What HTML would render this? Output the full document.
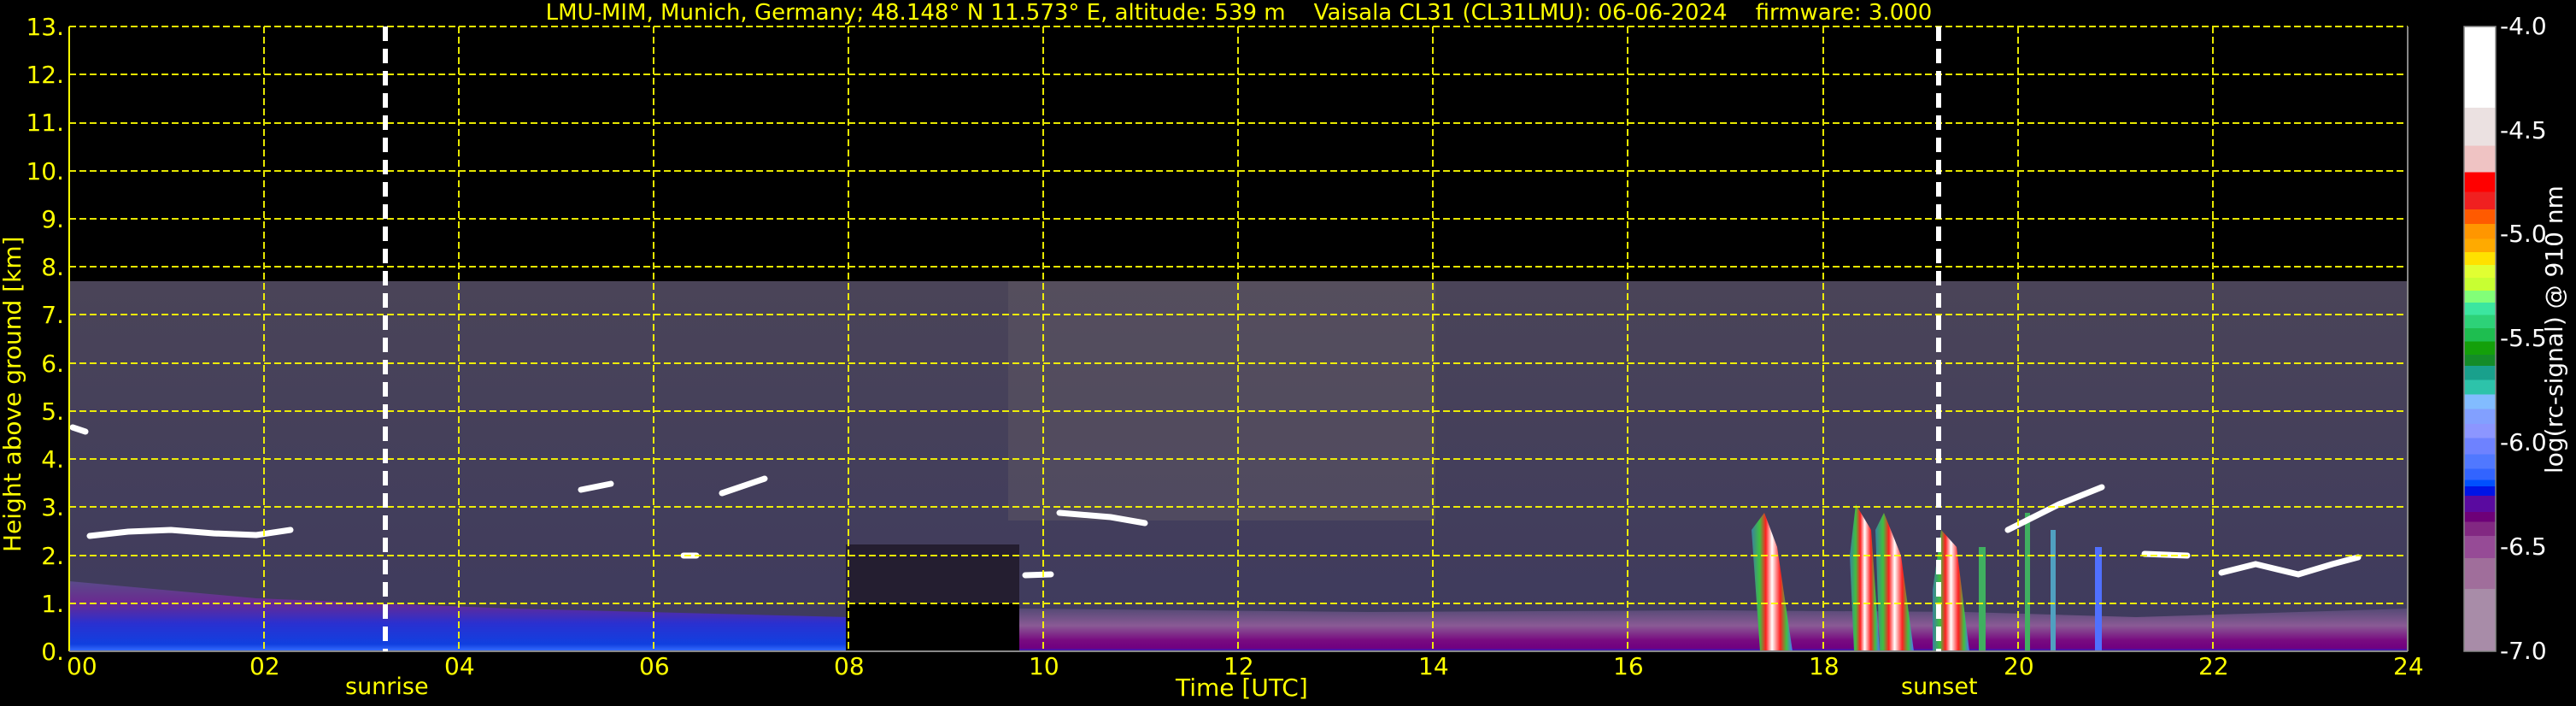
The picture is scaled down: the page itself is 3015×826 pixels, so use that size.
<!DOCTYPE html>
<html><head><meta charset="utf-8"><style>
html,body{margin:0;padding:0;background:#000;}
body{width:3015px;height:826px;overflow:hidden;position:relative;font-family:"DejaVu Sans","Liberation Sans",sans-serif;}
.t{position:absolute;white-space:nowrap;line-height:1;}
.y{color:#ffff00;}
.w{color:#fff;}
</style></head><body>
<svg width="3015" height="826" style="position:absolute;left:0;top:0">
<defs>
<linearGradient id="cb" x1="0" y1="0" x2="0" y2="1">
<stop offset="0" stop-color="#fff"/><stop offset=".13" stop-color="#fff"/>
<stop offset=".13" stop-color="#ebe1e1"/><stop offset=".191" stop-color="#ebe1e1"/>
<stop offset=".191" stop-color="#efc3c3"/><stop offset=".233" stop-color="#efc3c3"/>
<stop offset=".233" stop-color="#ff0000"/><stop offset=".265" stop-color="#ff0000"/>
<stop offset=".265" stop-color="#f02020"/><stop offset=".293" stop-color="#f02020"/>
<stop offset=".293" stop-color="#ff5a00"/><stop offset=".316" stop-color="#ff5a00"/>
<stop offset=".316" stop-color="#ff9600"/><stop offset=".34" stop-color="#ff9600"/>
<stop offset=".34" stop-color="#ffaa00"/><stop offset=".361" stop-color="#ffaa00"/>
<stop offset=".361" stop-color="#ffe100"/><stop offset=".382" stop-color="#ffe100"/>
<stop offset=".382" stop-color="#e1ff32"/><stop offset=".402" stop-color="#e1ff32"/>
<stop offset=".402" stop-color="#c8ff32"/><stop offset=".423" stop-color="#c8ff32"/>
<stop offset=".423" stop-color="#82ff78"/><stop offset=".442" stop-color="#82ff78"/>
<stop offset=".442" stop-color="#3ce6a0"/><stop offset=".462" stop-color="#3ce6a0"/>
<stop offset=".462" stop-color="#2dd278"/><stop offset=".483" stop-color="#2dd278"/>
<stop offset=".483" stop-color="#1ebe50"/><stop offset=".504" stop-color="#1ebe50"/>
<stop offset=".504" stop-color="#14a00a"/><stop offset=".525" stop-color="#14a00a"/>
<stop offset=".525" stop-color="#148c28"/><stop offset=".543" stop-color="#148c28"/>
<stop offset=".543" stop-color="#19a08c"/><stop offset=".566" stop-color="#19a08c"/>
<stop offset=".566" stop-color="#2dc3aa"/><stop offset=".589" stop-color="#2dc3aa"/>
<stop offset=".589" stop-color="#82bcff"/><stop offset=".612" stop-color="#82bcff"/>
<stop offset=".612" stop-color="#82a0ff"/><stop offset=".636" stop-color="#82a0ff"/>
<stop offset=".636" stop-color="#8c96ff"/><stop offset=".659" stop-color="#8c96ff"/>
<stop offset=".659" stop-color="#6e82ff"/><stop offset=".685" stop-color="#6e82ff"/>
<stop offset=".685" stop-color="#5078ff"/><stop offset=".708" stop-color="#5078ff"/>
<stop offset=".708" stop-color="#3264ff"/><stop offset=".726" stop-color="#3264ff"/>
<stop offset=".726" stop-color="#0050ff"/><stop offset=".736" stop-color="#0050ff"/>
<stop offset=".736" stop-color="#0014e6"/><stop offset=".751" stop-color="#0014e6"/>
<stop offset=".751" stop-color="#5a0aa0"/><stop offset=".777" stop-color="#5a0aa0"/>
<stop offset=".777" stop-color="#6e0078"/><stop offset=".793" stop-color="#6e0078"/>
<stop offset=".793" stop-color="#822882"/><stop offset=".815" stop-color="#822882"/>
<stop offset=".815" stop-color="#964b96"/><stop offset=".851" stop-color="#964b96"/>
<stop offset=".851" stop-color="#a06e9b"/><stop offset=".90" stop-color="#a06e9b"/>
<stop offset=".90" stop-color="#a88ca8"/><stop offset="1" stop-color="#a88ca8"/>
</linearGradient>
<linearGradient id="noise" x1="0" y1="0" x2="0" y2="1">
<stop offset="0" stop-color="#4a4458"/><stop offset="1" stop-color="#3e3a5e"/>
</linearGradient>
<linearGradient id="blueL" x1="0" y1="0" x2="0" y2="1">
<stop offset="0" stop-color="#5a4a8a"/><stop offset=".3" stop-color="#6a2a90"/><stop offset=".6" stop-color="#2a30d0"/><stop offset=".9" stop-color="#1040e0"/><stop offset="1" stop-color="#3a70ff"/>
</linearGradient>
<linearGradient id="purL" x1="0" y1="0" x2="0" y2="1">
<stop offset="0" stop-color="#554a75"/><stop offset=".4" stop-color="#8a5a95"/><stop offset=".75" stop-color="#780a80"/><stop offset=".93" stop-color="#700080"/><stop offset="1" stop-color="#1a30e0"/>
</linearGradient>
<linearGradient id="cl" x1="0" y1="0" x2="1" y2="0">
<stop offset="0" stop-color="#3a80a0"/><stop offset=".2" stop-color="#40c040"/><stop offset=".35" stop-color="#ff2020"/><stop offset=".5" stop-color="#ffffff"/><stop offset=".7" stop-color="#ff2020"/><stop offset=".85" stop-color="#40c040"/><stop offset="1" stop-color="#5070ff"/>
</linearGradient>
</defs>
<rect x="81" y="329" width="2737" height="433" fill="url(#noise)"/>
<rect x="1180" y="329" width="500" height="280" fill="#6a6068" opacity=".35"/>
<polygon points="81,680 300,700 600,712 993,722 993,762 81,762" fill="url(#blueL)"/>
<rect x="990" y="637" width="203" height="125" fill="#241e30"/>
<rect x="990" y="706" width="203" height="56" fill="#000"/>
<polygon points="1193,712 1600,716 2000,714 2300,716 2500,722 2818,712 2818,762 1193,762" fill="url(#purL)"/>
<!-- cloud columns -->
<polygon points="2050,620 2065,600 2080,640 2098,762 2060,762" fill="url(#cl)"/>
<polygon points="2165,650 2172,590 2190,620 2200,762 2170,762" fill="url(#cl)"/>
<polygon points="2195,620 2205,600 2225,650 2240,762 2200,762" fill="url(#cl)"/>
<polygon points="2262,690 2272,620 2290,640 2305,762 2262,762" fill="url(#cl)"/>
<rect x="2316" y="640" width="8" height="122" fill="#40b060"/>
<rect x="2370" y="600" width="6" height="162" fill="#40b060"/>
<rect x="2400" y="620" width="6" height="142" fill="#50a0c0"/>
<rect x="2452" y="640" width="8" height="122" fill="#5070ff"/>
<g stroke="#fff" stroke-width="7" fill="none" stroke-linecap="round">
<polyline points="105,627 150,622 200,620 250,624 300,626 340,620"/>
<polyline points="85,500 100,505"/>
<polyline points="680,573 715,566"/>
<polyline points="845,577 895,560"/>
<polyline points="800,650 815,650"/>
<polyline points="1200,673 1230,672"/>
<polyline points="1240,600 1300,605 1340,612"/>
<polyline points="2350,620 2410,590 2460,570"/>
<polyline points="2510,648 2560,650"/>
<polyline points="2600,670 2640,660 2690,672 2730,660 2760,652"/>
</g>
<g stroke="#ffff00" stroke-width="2" stroke-dasharray="8,4" opacity=".9">
<line x1="81" y1="31" x2="2818" y2="31"/><line x1="81" y1="87" x2="2818" y2="87"/>
<line x1="81" y1="144" x2="2818" y2="144"/><line x1="81" y1="200" x2="2818" y2="200"/>
<line x1="81" y1="256" x2="2818" y2="256"/><line x1="81" y1="312" x2="2818" y2="312"/>
<line x1="81" y1="368" x2="2818" y2="368"/><line x1="81" y1="425" x2="2818" y2="425"/>
<line x1="81" y1="481" x2="2818" y2="481"/><line x1="81" y1="537" x2="2818" y2="537"/>
<line x1="81" y1="593" x2="2818" y2="593"/><line x1="81" y1="650" x2="2818" y2="650"/>
<line x1="81" y1="706" x2="2818" y2="706"/>
<line x1="309" y1="31" x2="309" y2="762"/><line x1="537" y1="31" x2="537" y2="762"/>
<line x1="765" y1="31" x2="765" y2="762"/><line x1="993" y1="31" x2="993" y2="762"/>
<line x1="1221" y1="31" x2="1221" y2="762"/><line x1="1449" y1="31" x2="1449" y2="762"/>
<line x1="1677" y1="31" x2="1677" y2="762"/><line x1="1905" y1="31" x2="1905" y2="762"/>
<line x1="2134" y1="31" x2="2134" y2="762"/><line x1="2362" y1="31" x2="2362" y2="762"/>
<line x1="2590" y1="31" x2="2590" y2="762"/>
</g>
<line x1="81" y1="31" x2="81" y2="762" stroke="#ffff00" stroke-width="2"/>
<line x1="81" y1="762" x2="2818" y2="762" stroke="#888" stroke-width="2"/>
<line x1="2818" y1="31" x2="2818" y2="762" stroke="#888" stroke-width="2"/>
<g stroke="#fff" stroke-width="6" stroke-dasharray="17,9">
<line x1="451" y1="31" x2="451" y2="762"/>
<line x1="2269" y1="31" x2="2269" y2="762"/>
</g>
<rect x="2884" y="31" width="37" height="731" fill="url(#cb)"/>
<rect x="2884" y="31" width="37" height="731" fill="none" stroke="#888" stroke-width="1.5"/>
</svg>
<div class="t y" style="left:0;width:2900px;text-align:center;top:2px;font-size:26px;">LMU-MIM, Munich, Germany; 48.148° N 11.573° E, altitude: 539 m&nbsp;&nbsp;&nbsp;&nbsp;Vaisala CL31 (CL31LMU): 06-06-2024&nbsp;&nbsp;&nbsp;&nbsp;firmware: 3.000</div>
<div class="t y" style="right:2940px;top:18px;font-size:28px;">13.</div>
<div class="t y" style="right:2940px;top:74px;font-size:28px;">12.</div>
<div class="t y" style="right:2940px;top:130px;font-size:28px;">11.</div>
<div class="t y" style="right:2940px;top:187px;font-size:28px;">10.</div>
<div class="t y" style="right:2940px;top:243px;font-size:28px;">9.</div>
<div class="t y" style="right:2940px;top:299px;font-size:28px;">8.</div>
<div class="t y" style="right:2940px;top:355px;font-size:28px;">7.</div>
<div class="t y" style="right:2940px;top:412px;font-size:28px;">6.</div>
<div class="t y" style="right:2940px;top:468px;font-size:28px;">5.</div>
<div class="t y" style="right:2940px;top:524px;font-size:28px;">4.</div>
<div class="t y" style="right:2940px;top:580px;font-size:28px;">3.</div>
<div class="t y" style="right:2940px;top:637px;font-size:28px;">2.</div>
<div class="t y" style="right:2940px;top:693px;font-size:28px;">1.</div>
<div class="t y" style="right:2940px;top:749px;font-size:28px;">0.</div>
<div class="t y" style="left:-155px;top:462px;width:340px;text-align:center;font-size:28px;transform:rotate(-90deg);">Height above ground [km]</div>
<div class="t y" style="left:78px;top:766px;font-size:28px;">00</div>
<div class="t y" style="left:292px;top:766px;font-size:28px;">02</div>
<div class="t y" style="left:520px;top:766px;font-size:28px;">04</div>
<div class="t y" style="left:748px;top:766px;font-size:28px;">06</div>
<div class="t y" style="left:976px;top:766px;font-size:28px;">08</div>
<div class="t y" style="left:1204px;top:766px;font-size:28px;">10</div>
<div class="t y" style="left:1432px;top:766px;font-size:28px;">12</div>
<div class="t y" style="left:1660px;top:766px;font-size:28px;">14</div>
<div class="t y" style="left:1888px;top:766px;font-size:28px;">16</div>
<div class="t y" style="left:2117px;top:766px;font-size:28px;">18</div>
<div class="t y" style="left:2345px;top:766px;font-size:28px;">20</div>
<div class="t y" style="left:2573px;top:766px;font-size:28px;">22</div>
<div class="t y" style="left:2801px;top:766px;font-size:28px;">24</div>
<div class="t y" style="left:404px;top:790px;font-size:27px;">sunrise</div>
<div class="t y" style="left:1376px;top:791px;font-size:28px;">Time [UTC]</div>
<div class="t y" style="left:2225px;top:790px;font-size:27px;">sunset</div>
<div class="t w" style="left:2926px;top:17px;font-size:28px;">-4.0</div>
<div class="t w" style="left:2926px;top:139px;font-size:28px;">-4.5</div>
<div class="t w" style="left:2926px;top:260px;font-size:28px;">-5.0</div>
<div class="t w" style="left:2926px;top:382px;font-size:28px;">-5.5</div>
<div class="t w" style="left:2926px;top:504px;font-size:28px;">-6.0</div>
<div class="t w" style="left:2926px;top:626px;font-size:28px;">-6.5</div>
<div class="t w" style="left:2926px;top:748px;font-size:28px;">-7.0</div>
<div class="t w" style="left:2840px;top:390px;width:300px;text-align:center;font-size:28px;transform:rotate(-90deg);">log(rc-signal) @ 910 nm</div>
</body></html>
